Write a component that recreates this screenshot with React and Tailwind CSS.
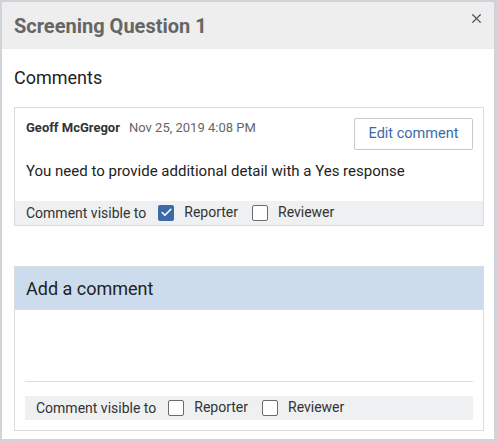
import { X, Check } from 'lucide-react';

function Box({ checked }) {
  return checked ? (
    <span className="flex h-4 w-4 items-center justify-center rounded-[2px] bg-[#3b6aa8]">
      <Check size={13} strokeWidth={3} className="text-white" />
    </span>
  ) : (
    <span className="block h-4 w-4 rounded-[2px] border border-[#6b6b6b] bg-white" />
  );
}

function Visibility({ reporter, className }) {
  return (
    <div className={`flex h-6 items-center bg-[#eef0f2] text-[14px] text-[#333] ${className}`}>
      <span className="mt-[2px]">Comment visible to</span>
      <span className="ml-[12px]"><Box checked={reporter} /></span>
      <span className="ml-[10px]">Reporter</span>
      <span className="ml-[14px]"><Box /></span>
      <span className="ml-[10px]">Reviewer</span>
    </div>
  );
}

export default function App() {
  return (
    <div
      className="h-[442px] w-[497px] overflow-hidden border-b-[3px] border-l-2 border-r-[3px] border-t-2 border-[#cfd4da] bg-white"
      style={{ fontFamily: 'Roboto, "Liberation Sans", sans-serif' }}
    >
      <div className="flex h-[47px] items-start justify-between bg-[#eeeeee] pl-3 pr-[10px]">
        <h1 className="mt-[9px] text-[20px] font-bold text-[#666]">Screening Question 1</h1>
        <X size={15} strokeWidth={2} className="mt-[9px] text-[#555]" />
      </div>

      <div className="pl-3 pr-[10px]">
        <h2 className="mt-[15px] text-[18px] text-[#222]">Comments</h2>

        <div className="mt-[16px] border border-[#dcdcdc]">
          <div className="flex items-start justify-between pl-[11px] pr-[10px] pt-[10px]">
            <div className="flex items-center gap-[9px] text-[13px]">
              <span className="font-bold text-[#333]">Geoff McGregor</span>
              <span className="text-[13px] text-[#666]">Nov 25, 2019 4:08 PM</span>
            </div>
            <button className="h-[32px] w-[119px] rounded-[2px] border border-[#c8c8c8] bg-white text-[14.5px] text-[#3b6aa8]">
              Edit comment
            </button>
          </div>
          <p className="mt-[10px] pl-[11px] text-[15px] text-[#222]">
            You need to provide additional detail with a Yes response
          </p>
          <Visibility reporter className="mt-[18px] pl-[11px]" />
        </div>

        <div className="mt-[40px] h-[165px] border border-[#dcdcdc]">
          <div className="flex h-[43px] items-center bg-[#ccdcec] pl-[11px]">
            <h2 className="text-[18px] text-[#222]">Add a comment</h2>
          </div>
          <div className="mx-[10px] mt-[71px] border-t border-[#dedede]" />
          <Visibility className="mx-[10px] mt-[14px] pl-[11px]" />
        </div>
      </div>
    </div>
  );
}
